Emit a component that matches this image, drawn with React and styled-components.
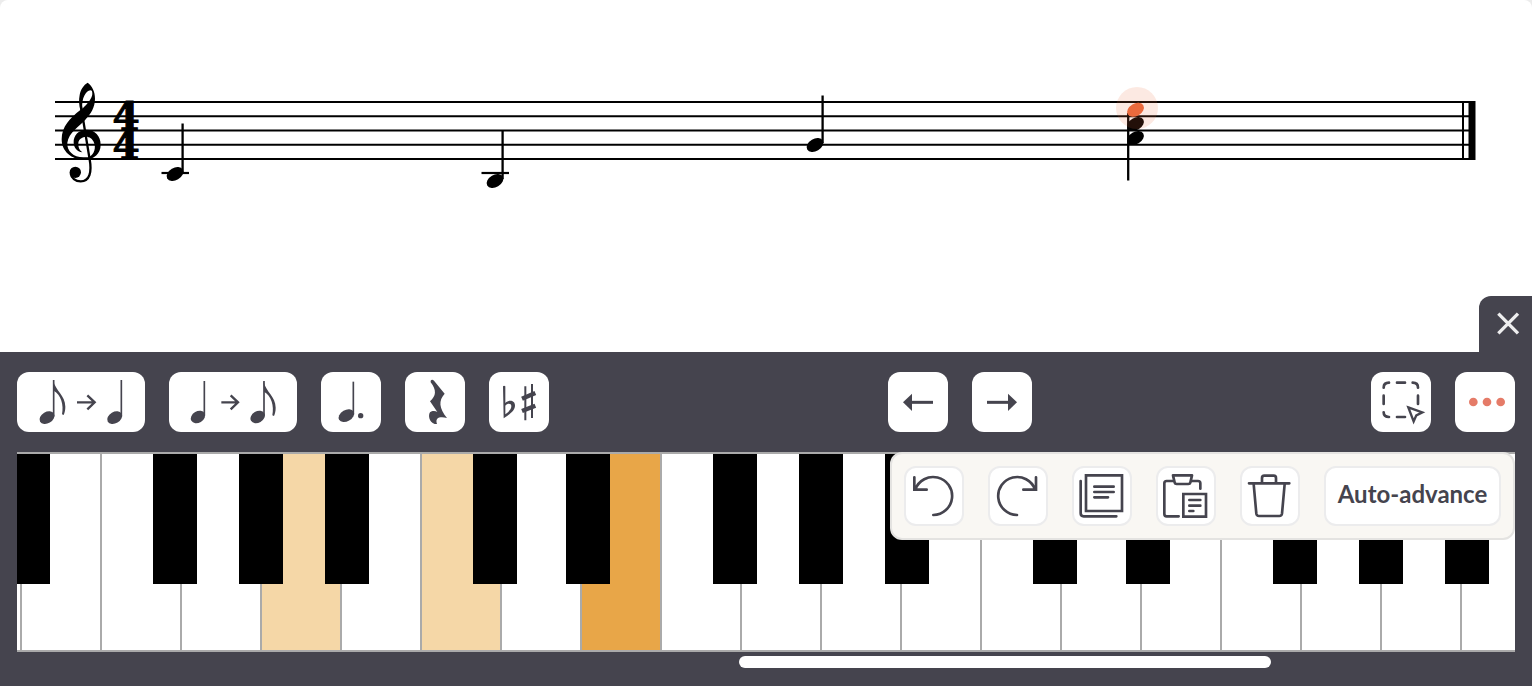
import React from 'react'
import styled, { createGlobalStyle } from 'styled-components'

const INK = '#45444e';

const GlobalStyle = createGlobalStyle`
*{
  box-sizing: border-box;
}
body{
  margin: 0;
  background-color: #ececec;
  font-family: Lato, "Open Sans", sans-serif;
}
button{
  font-family: inherit;
  cursor: pointer;
}
`;

const Container = styled.div`
  min-height: 100vh;
  display: flex;
  flex-direction: column;
`;

const Score = styled.main`
  position: relative;
  flex: 1;
  min-height: 240px;
  background-color: #fff;
  border-radius: 8px 8px 0 0;

  svg{
    display: block;
    width: 100%;
    height: auto;
  }
`;

const CloseButton = styled.button`
  position: absolute;
  right: 0;
  bottom: 0;
  width: 53px;
  height: 56px;
  padding: 0;
  border: none;
  border-radius: 12px 0 0 0;
  background-color: ${INK};

  svg{
    display: block;
  }
`;

const Panel = styled.section`
  background-color: ${INK};
  padding: 20px 17px 18px;
`;

const Toolbar = styled.div`
  display: flex;
  justify-content: space-between;
  margin-bottom: 20px;
`;

const Group = styled.div`
  display: flex;
  gap: 24px;
`;

const ToolButton = styled.button`
  width: ${(p) => (p.$wide ? 128 : 60)}px;
  height: 60px;
  padding: 0;
  border: none;
  border-radius: 12px;
  background-color: #fff;

  svg{
    display: block;
    width: 100%;
    height: 100%;
  }
`;

const MenuButton = styled(ToolButton)`
  border: 2px solid #ececed;
`;

const TextButton = styled.button`
  height: 60px;
  min-width: 177px;
  padding: 0 8px 6px;
  border: 2px solid #ececed;
  border-radius: 12px;
  background-color: #fff;
  color: ${INK};
  font-size: 24px;
  font-weight: 700;
  white-space: nowrap;
`;

const KeyboardArea = styled.div`
  position: relative;
`;

const Keyboard = styled.div`
  height: 200px;
  overflow: hidden;
  border-top: 2px solid #aaa;
  border-bottom: 2px solid #aaa;
  background-color: #fff;
`;

const Keys = styled.div`
  display: flex;
  height: 100%;
  margin-left: -75px;
`;

const KeySlot = styled.div`
  position: relative;
  flex: 0 0 80px;
`;

const WhiteKey = styled.button`
  display: block;
  width: 100%;
  height: 100%;
  padding: 0;
  border: none;
  border-right: 2px solid #aaa;
  background-color: ${(p) => p.$color || '#fff'};
`;

const BlackKey = styled.button`
  position: absolute;
  top: 0;
  left: ${(p) => p.$left}px;
  z-index: 1;
  width: 44px;
  height: 130px;
  padding: 0;
  border: none;
  background-color: #000;
`;

const MoreMenu = styled.div`
  position: absolute;
  top: 0;
  right: 0;
  z-index: 2;
  display: flex;
  gap: 24px;
  padding: 12px;
  border: 2px solid #e4e3e1;
  border-radius: 12px;
  background-color: #f9f7f3;
`;

const Scroller = styled.input`
  display: block;
  width: 100%;
  height: 12px;
  margin: 4px 0 0;
  appearance: none;
  background: transparent;

  &::-webkit-slider-thumb{
    appearance: none;
    width: 532px;
    height: 12px;
    border-radius: 6px;
    background-color: #fff;
  }
`;

const STAFF_LINES = [102, 116.25, 130.5, 144.75, 159];

const NOTES = [
  { x: 175, y: 174, stem: 123.5, ledger: true },
  { x: 495, y: 181, stem: 130.5, ledger: true },
  { x: 815, y: 145, stem: 95.5 },
];

// where the black key sits inside the white key on its left
const BLACK_OFFSET = { C: 51, D: 64, F: 51, G: 57, A: 63 };
const NAMES = ['C', 'D', 'E', 'F', 'G', 'A', 'B'];
const PRESSED = { A4: '#f5d7a7', C5: '#f5d7a7', E5: '#e8a648' };

const keys = Array.from({ length: 21 }, (_, i) => {
  const n = i + 1;
  return { name: NAMES[n % 7], octave: 4 + Math.floor(n / 7) };
});

function Head({ x, y, rx = 9, ry = 6.2, fill }) {
  return <ellipse cx={x} cy={y} rx={rx} ry={ry} fill={fill} transform={`rotate(-30 ${x} ${y})`} />
}

function Clef() {
  return (
    <g transform="translate(40 70) scale(0.3333)">
      <path
        fillRule="evenodd"
        d="M143 38C156 48 165 64 165 86C165 112 152 132 136 149C118 169 86 188 82 218C80 242 100 262 130 262C138 262 142 262 147 261C164 252 168 232 162 218C158 206 148 200 138 200C124 201 114 210 115 222C115 234 119 241 127 247C110 244 102 233 101 218C100 196 116 180 138 179C165 179 182 198 182 224C182 250 163 269 132 269C95 269 65 245 65 208C65 169 90 145 121 120C117 105 116 90 119 75C122 58 131 45 143 38ZM151 61C138 62 124 85 127 116C143 101 156 86 157 72C157 64 156 61 151 61Z"
      />
      <path d="M123 110L149 268C156 306 149 334 122 334C106 334 94 324 92 310" fill="none" stroke="#000" strokeWidth="7" />
      <circle cx="106" cy="307" r="17" />
    </g>
  )
}

function Staff() {
  return (
    <svg viewBox="0 0 1532 352" role="img" aria-label="Music score">
      <g stroke="#000" strokeWidth="2">
        {STAFF_LINES.map((y) => <path key={y} d={`M55 ${y}H1475`} />)}
        <path d="M1463 101V160" />
        <path d="M1472 101V160" strokeWidth="7" />
      </g>
      <Clef />
      <g fontFamily="DejaVu Serif, serif" fontWeight="700" fontSize="39" textAnchor="middle" stroke="#000" strokeWidth="1">
        <text x="126" y="130">4</text>
        <text x="126" y="159">4</text>
      </g>
      {NOTES.map((n) => (
        <g key={n.x} stroke="#000" strokeWidth="0">
          <Head x={n.x} y={n.y} />
          <path d={`M${n.x + 7.6} ${n.stem}V${n.y - 2}`} strokeWidth="2.3" />
          {n.ledger && <path d={`M${n.x - 13.5} 173H${n.x + 14}`} strokeWidth="2.2" />}
        </g>
      ))}
      <path d="M1128.2 113V180.5" stroke="#000" strokeWidth="2.3" />
      <Head x={1135.5} y={138} />
      <Head x={1135.5} y={124} />
      <Head x={1135.5} y={109.8} fill="#eb6a3e" />
      <circle cx="1137" cy="108" r="21" fill="#eb6a3e" opacity="0.15" />
    </svg>
  )
}

// icons are drawn on a grid of three units to the pixel
function Icon({ box, width = 3, children }) {
  return (
    <svg viewBox={box} fill="none" stroke={INK} strokeWidth={width} aria-hidden="true">
      {children}
    </svg>
  )
}

function SmallNote({ x, y, top, flag, size = 24 }) {
  const s = x + size - 4;
  return (
    <>
      <g stroke="none"><Head x={x} y={y} rx={size} ry={17} fill={INK} /></g>
      <path d={`M${s} ${top}V${y - 4}`} strokeWidth="5" />
      {flag && (
        <path
          stroke="none"
          fill={INK}
          d={`M${s - 2} ${top}C${s + 6} ${top + 34} ${s + 35} ${top + 46} ${s + 35} ${top + 80}C${s + 35} ${top + 90} ${s + 33} ${top + 98} ${s + 30} ${top + 105}L${s + 25} ${top + 103}C${s + 31} ${top + 74} ${s + 22} ${top + 44} ${s} ${top + 32}Z`}
        />
      )}
    </>
  )
}

function App() {
  const [scroll, setScroll] = React.useState(747);
  const [open, setOpen] = React.useState(true);

  return (
    <Container>
      <GlobalStyle />
      <Score>
        <Staff />
        <CloseButton aria-label="Close keyboard">
          <svg viewBox="387 33 159 168" width="53" height="56" fill="none" stroke="#eeeeef" strokeWidth="10">
            <path d="M445 86L504 145M504 86L445 145" />
          </svg>
        </CloseButton>
      </Score>

      <Panel>
        <Toolbar>
          <Group>
            <ToolButton $wide aria-label="Longer note">
              <Icon box="51 66 384 180">
                <SmallNote x={141} y={203} top={90} flag />
                <path d="M231 157H284M262 136L284 157L262 178" strokeWidth="7" />
                <SmallNote x={344} y={203} top={90} />
              </Icon>
            </ToolButton>
            <ToolButton $wide aria-label="Shorter note">
              <Icon box="507 66 384 180">
                <SmallNote x={594} y={201} top={93} size={23} />
                <path d="M664 157H714M692 136L714 157L692 178" strokeWidth="7" />
                <SmallNote x={773} y={201} top={93} size={23} flag />
              </Icon>
            </ToolButton>
            <ToolButton aria-label="Dotted note">
              <Icon box="63 36 180 180">
                <SmallNote x={139} y={167} top={65} size={25} />
                <circle cx="182" cy="167" r="8" fill={INK} stroke="none" />
              </Icon>
            </ToolButton>
            <ToolButton aria-label="Rest">
              <Icon box="315 36 180 180">
                <path
                  fill={INK}
                  stroke="none"
                  d="M392 62Q396 57 402 62L434 101C415 122 417 144 441 174C421 169 404 172 411 192H404C387 187 384 165 390 157C396 152 406 152 412 156L390 124C409 108 410 90 392 67Z"
                />
              </Icon>
            </ToolButton>
            <ToolButton aria-label="Accidentals">
              <Icon box="567 36 180 180">
                <path
                  fill={INK}
                  stroke="none"
                  fillRule="evenodd"
                  d="M609 79Q612 76 616 79V129C625 119 645 119 645 137C644 153 630 161 611 175ZM616 137V163C627 155 634 147 634 139C634 129 622 130 616 137Z"
                />
                <path d="M676 79V181M696 72V174" strokeWidth="6" />
                <path d="M666 116L706 99M666 153L706 137" strokeWidth="13" />
              </Icon>
            </ToolButton>
          </Group>

          <Group>
            <ToolButton aria-label="Previous">
              <Icon box="54 36 180 180">
                <path d="M120 127H189" strokeWidth="9" />
                <path d="M99 127L126 101V153Z" fill={INK} stroke="none" />
              </Icon>
            </ToolButton>
            <ToolButton aria-label="Next">
              <Icon box="306 36 180 180">
                <path d="M351 127H420" strokeWidth="9" />
                <path d="M441 127L414 101V153Z" fill={INK} stroke="none" />
              </Icon>
            </ToolButton>
          </Group>

          <Group>
            <ToolButton aria-label="Select area">
              <Icon box="63 261 180 180" width={8}>
                <path
                  strokeLinecap="round"
                  d="M101 308C101 298 107 293 117 293M141 293H165M188 293C199 293 204 299 204 308M101 332V357M204 332V357M101 382C101 391 107 396 117 396M141 396H165"
                />
                <path d="M175 367L217 382L199 391L191 409Z" strokeWidth="7" />
              </Icon>
            </ToolButton>
            <ToolButton aria-label="More" aria-expanded={open} onClick={() => setOpen(!open)}>
              <Icon box="315 261 180 180">
                <g fill="#e57b68" stroke="none">
                  <circle cx="370" cy="351" r="13" />
                  <circle cx="411" cy="351" r="13" />
                  <circle cx="452" cy="351" r="13" />
                </g>
              </Icon>
            </ToolButton>
          </Group>
        </Toolbar>

        <KeyboardArea>
          <Keyboard>
            <Keys>
              {keys.map((k) => (
                <KeySlot key={k.name + k.octave}>
                  <WhiteKey aria-label={k.name + k.octave} $color={PRESSED[`${k.name}${k.octave}`]} />
                  {BLACK_OFFSET[k.name] && (
                    <BlackKey aria-label={`${k.name} sharp ${k.octave}`} $left={BLACK_OFFSET[k.name]} />
                  )}
                </KeySlot>
              ))}
            </Keys>
          </Keyboard>

          {open && (
            <MoreMenu>
              <MenuButton aria-label="Undo">
                <Icon box="78 69 168 168" width={8}>
                  <path strokeLinecap="round" d="M160 210A57 57 0 1 0 106 133M103 97V134H140" />
                </Icon>
              </MenuButton>
              <MenuButton aria-label="Redo">
                <Icon box="330 69 168 168" width={8}>
                  <path strokeLinecap="round" d="M411 210A57 57 0 1 1 465 133M468 97V134H430" />
                </Icon>
              </MenuButton>
              <MenuButton aria-label="Copy">
                <Icon box="582 69 168 168" width={8}>
                  <path d="M618 91H726V198H618Z" />
                  <path strokeLinecap="round" d="M602 108V205Q602 214 611 214H709M643 125H701M643 141H701M643 157H684" />
                </Icon>
              </MenuButton>
              <MenuButton aria-label="Paste">
                <Icon box="84 69 168 168" width={8}>
                  <g strokeLinecap="round" strokeLinejoin="round">
                    <path d="M146 214H110Q103 214 103 207V115Q103 108 110 108H128M186 108H204Q211 108 211 115V131" />
                    <path d="M129 91H186L181 113Q180 117 175 117H140Q135 117 134 113Z" />
                    <path d="M178 165H211M178 182H211M178 198H190" />
                  </g>
                  <path d="M160 147H228V215H160Z" />
                </Icon>
              </MenuButton>
              <MenuButton aria-label="Delete">
                <Icon box="336 69 168 168" width={8}>
                  <path
                    strokeLinecap="round"
                    d="M357 115H478M396 113V99Q396 92 403 92H431Q438 92 438 99V113M371 117L379 206Q380 213 387 213H448Q455 213 456 206L464 117"
                  />
                </Icon>
              </MenuButton>
              <TextButton>Auto-advance</TextButton>
            </MoreMenu>
          )}
        </KeyboardArea>

        <Scroller
          type="range"
          aria-label="Keyboard position"
          min="0"
          max="1000"
          value={scroll}
          onChange={(e) => setScroll(Number(e.target.value))}
        />
      </Panel>
    </Container>
  )
}

export default App
